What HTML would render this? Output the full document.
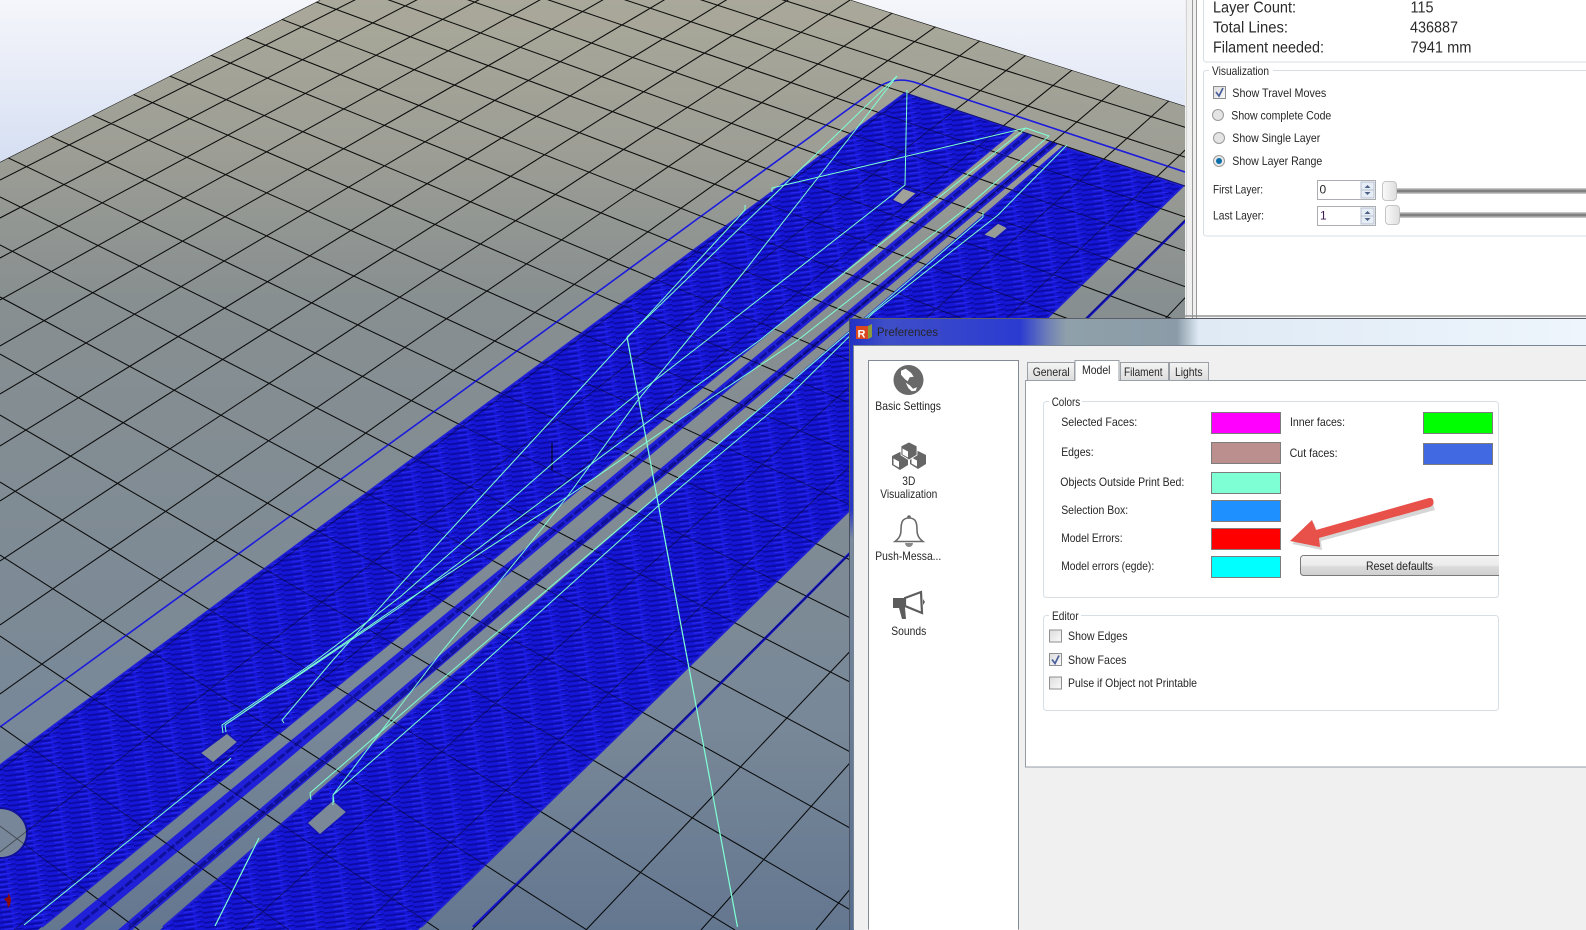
<!DOCTYPE html>
<html><head><meta charset="utf-8"><title>Preferences</title>
<style>
html,body{margin:0;padding:0;background:#f0f0f0;width:1586px;height:930px;overflow:hidden}
svg{display:block}
text{font-family:"Liberation Sans",sans-serif;font-size:12px;fill:#262626;white-space:pre}
.b{font-size:15.5px;fill:#2a2a2a}
</style></head><body>
<svg xmlns="http://www.w3.org/2000/svg" width="1586" height="930" viewBox="0 0 1586 930" style="overflow:hidden">
<defs>
<linearGradient id="sky" x1="0" y1="0" x2="0" y2="170" gradientUnits="userSpaceOnUse"><stop offset="0" stop-color="#f5f6fb"/><stop offset="1" stop-color="#d4def2"/></linearGradient>
<linearGradient id="bed" x1="0" y1="0" x2="0" y2="930" gradientUnits="userSpaceOnUse"><stop offset="0" stop-color="#a9a89a"/><stop offset=".16" stop-color="#9d9e95"/><stop offset=".32" stop-color="#888f90"/><stop offset=".78" stop-color="#788898"/><stop offset="1" stop-color="#647790"/></linearGradient>
<pattern id="bl" width="30" height="5" patternUnits="userSpaceOnUse" patternTransform="rotate(-7)">
<rect width="30" height="5" fill="#1616d6"/><rect width="20" height="1.8" fill="#0b0ba4"/><rect x="11" y="2.5" width="15" height="1.1" fill="#2828ee"/><rect x="23" y="3.5" width="7" height="1.4" fill="#0b0ba4"/></pattern>
<linearGradient id="title" x1="849" y1="0" x2="1586" y2="0" gradientUnits="userSpaceOnUse"><stop offset="0" stop-color="#2030c4"/><stop offset=".05" stop-color="#3f4ec8"/><stop offset=".232" stop-color="#2b3bd0"/><stop offset=".27" stop-color="#6f80b8"/><stop offset=".295" stop-color="#8fa0aa"/><stop offset=".445" stop-color="#8b9ca8"/><stop offset=".475" stop-color="#dfeaf5"/><stop offset="1" stop-color="#eef5fc"/></linearGradient>
<linearGradient id="fl" x1="0" y1="346" x2="0" y2="930" gradientUnits="userSpaceOnUse"><stop offset="0" stop-color="#2433d0"/><stop offset=".28" stop-color="#2a38c8"/><stop offset=".33" stop-color="#7b8b9d"/><stop offset="1" stop-color="#566d8e"/></linearGradient>
<linearGradient id="tab" x1="0" y1="0" x2="0" y2="1"><stop offset="0" stop-color="#f4f4f4"/><stop offset="1" stop-color="#dddddd"/></linearGradient>
<linearGradient id="btn" x1="0" y1="0" x2="0" y2="1"><stop offset="0" stop-color="#f4f4f4"/><stop offset=".5" stop-color="#ebebeb"/><stop offset=".55" stop-color="#dcdcdc"/><stop offset="1" stop-color="#cfcfcf"/></linearGradient>
<linearGradient id="track" x1="0" y1="0" x2="0" y2="1"><stop offset="0" stop-color="#d8d8d8"/><stop offset=".5" stop-color="#6f6f6f"/><stop offset="1" stop-color="#d8d8d8"/></linearGradient>
<linearGradient id="thumb" x1="0" y1="0" x2="1" y2="0"><stop offset="0" stop-color="#fafafa"/><stop offset="1" stop-color="#dedede"/></linearGradient>
<linearGradient id="cb" x1="0" y1="0" x2="1" y2="1"><stop offset="0" stop-color="#dcdcdc"/><stop offset="1" stop-color="#fafafa"/></linearGradient>
<clipPath id="bedclip"><polygon points="0,162 320,0 851,0 1185,106 1185,930 0,930"/></clipPath>
<clipPath id="bc"><rect x="1290" y="545" width="209" height="35"/></clipPath>
<path id="grid" fill="none" stroke="#000" stroke-width="1" d="
M0 180L1200 -429M0 218L1200 -410M0 258L1200 -389M0 300L1200 -367M0 346L1200 -343M0 394L1200 -318M0 446L1200 -291M0 501L1200 -262M0 561L1200 -231M0 625L1200 -198M0 694L1200 -162M0 770L1200 -123M0 852L1200 -80M14 930L1200 -34M128 930L1200 17M242 930L1200 73M358 930L1200 136M472 930L1200 205M586 930L1200 282M701 930L1200 370M816 930L1200 469M930 930L1200 583M1044 930L1200 714M1159 930L1200 869
M0 -248L1200 132M0 -228L1200 162M0 -208L1200 191M0 -187L1200 222M0 -164L1200 256M0 -140L1200 292M0 -115L1200 329M0 -88L1200 369M0 -59L1200 412M0 -30L1200 455M0 5L1200 507M0 37L1200 554M0 74L1200 609M0 113L1200 666M0 154L1200 727M0 197L1200 791M0 245L1200 862M0 297L1183 930M0 354L1033 930M0 415L885 930M0 482L735 930M0 555L587 930M0 636L439 930M0 726L289 930M0 826L139 930"/>
</defs>

<!-- 3D scene -->
<rect width="1185" height="930" fill="url(#sky)"/>
<polygon points="0,162 320,0 851,0 1185,106 1185,930 0,930" fill="url(#bed)"/>
<g clip-path="url(#bedclip)">
<use href="#grid" opacity=".85"/>
<path d="M0 727 L450 400 L700 217 L880 86 Q897 76 917 83 L1185 172" fill="none" stroke="#1c1cdc" stroke-width="1.6"/>
<path d="M1185 221 L848 555 L684 720 L473 927" fill="none" stroke="#1414c8" stroke-width="2.6"/>
<!-- print parts -->
<polygon points="905,93 1015,130 560,505 200,798 38,930 0,930 0,765" fill="url(#bl)"/>
<path d="M0 765L905 93L1015 130L560 505L200 798L42 927" fill="none" stroke="#2020d4" stroke-width="1.5"/>
<polygon points="1063,147 1183,186 418,930 160,930 200,895 560,582" fill="url(#bl)"/>
<path d="M163 927L200 895L560 582L1063 147L1183 186L421 927" fill="none" stroke="#2020d4" stroke-width="2"/>
<polygon points="1024,132 1033,135 560,531 200,833 84,930 60,930 200,815 560,520" fill="#2020d8"/>
<path d="M1028 134 L560 526 L200 824 L76 927" stroke="#10109e" stroke-width="3" stroke-dasharray="9 2" fill="none"/>
<polygon points="1050,141 1058,144 560,564 200,872 132,930 118,930 200,860 560,553" fill="#2020d8"/>
<path d="M1054 143 L560 559 L200 866 L129 927" stroke="#10109e" stroke-width="3" stroke-dasharray="9 2" fill="none"/>
<!-- notches -->
<g stroke="#1212b8" stroke-width="1.5">
<polygon points="892,200 903,188 917,193 903,205" fill="#a0a29a"/>
<polygon points="983,235 998,223 1008,228 995,239" fill="#989c97"/>
<polygon points="200,753 227,733 238,742 213,763" fill="#7f8c98"/>
<polygon points="307,823 333,800 347,812 320,835" fill="#7a8898"/>
<ellipse cx="0" cy="833" rx="27" ry="25" fill="#778698" stroke="#10109a" stroke-width="2"/>
</g>
<!-- grid seen through the print -->
<use href="#grid" opacity=".42"/>
<path d="M552 443V470" stroke="#000" stroke-width="1"/>
<!-- travel moves -->
<g fill="none" stroke="#7fffd4" stroke-width="1">
<path d="M772 192L772 188L1026 128L760 340L677 400L400 607L225 725L226 732"/>
<path d="M1026 128L1049 136L960 213L798 340L708 400L567 497L400 605L225 725"/>
<path d="M907 90L905 185L707 340L627 402L553 463L400 597L310 665L222 725L223 733"/>
<path d="M745 205L745 210L570 400L400 585L333 660L282 720L284 723"/>
<path d="M897 76L627 337"/>
<path d="M897 76L850 137L743 273L638 400L567 497L517 560L443 650L407 697L333 795L334 802"/>
<path d="M627 337L737.5 927" stroke-width="1.2"/>
<path d="M983 212L983 217L770 400L420 698L310 793L311 800"/>
<path d="M1067 145L998 215L873 313L785 400L657 507L442 700L333 795L333 805"/>
<path d="M231 758L229 760L24 925"/>
<path d="M259 838L215 926" stroke-width="1.2"/>
</g>
<path d="M8 893l2 3 1 4-1 5-2 3-1-6-3-3 4-2z" fill="#8c0c0c"/>
<path d="M0 162L320 0M851 0L1185 106" stroke="#111" stroke-width="1" fill="none"/>
</g>

<!-- right panel -->
<rect x="1185" y="0" width="401" height="318" fill="#f0f0f0"/>
<rect x="1186" y="0" width="1" height="318" fill="#d4d4d4"/>
<rect x="1192" y="0" width="1" height="318" fill="#9a9a9a"/>
<rect x="1196" y="0" width="1" height="318" fill="#9a9a9a"/>
<rect x="1197" y="0" width="389" height="317" fill="#fff"/>
<rect x="1185" y="315" width="401" height="2" fill="#8f8f8f" opacity=".7"/>
<path d="M1203.5 0V59Q1203.5 62 1206.5 62H1586M1586 70.5H1206.5Q1203.5 70.5 1203.5 73.5V233Q1203.5 236 1206.5 236H1586" fill="none" stroke="#d5dfe5"/>
<rect x="1209" y="65" width="64" height="12" fill="#fff"/>
<text class="b" x="1213" y="12.5" textLength="83" lengthAdjust="spacingAndGlyphs">Layer Count:</text>
<text class="b" x="1213" y="32.5" textLength="75" lengthAdjust="spacingAndGlyphs">Total Lines:</text>
<text class="b" x="1213" y="52.5" textLength="111" lengthAdjust="spacingAndGlyphs">Filament needed:</text>
<text class="b" x="1410.5" y="12.5" textLength="23" lengthAdjust="spacingAndGlyphs">115</text>
<text class="b" x="1410" y="32.5" textLength="48" lengthAdjust="spacingAndGlyphs">436887</text>
<text class="b" x="1410.5" y="52.5" textLength="61" lengthAdjust="spacingAndGlyphs">7941 mm</text>
<text x="1212" y="75" textLength="57" lengthAdjust="spacingAndGlyphs">Visualization</text>
<rect x="1213.5" y="86.5" width="12" height="12" fill="url(#cb)" stroke="#8e8f8f"/>
<path d="M1216 92l3 4 4-8" fill="none" stroke="#4a5f9a" stroke-width="1.7"/>
<text x="1232.3" y="97" textLength="94" lengthAdjust="spacingAndGlyphs">Show Travel Moves</text>
<circle cx="1218" cy="115" r="5.5" fill="#e4e4e4" stroke="#9a9a9a"/>
<text x="1231.3" y="119.5" textLength="100" lengthAdjust="spacingAndGlyphs">Show complete Code</text>
<circle cx="1219" cy="138" r="5.5" fill="#e4e4e4" stroke="#9a9a9a"/>
<text x="1232.3" y="142" textLength="88" lengthAdjust="spacingAndGlyphs">Show Single Layer</text>
<circle cx="1219" cy="161" r="5.5" fill="#eaeaea" stroke="#9a9a9a"/>
<circle cx="1219" cy="161" r="3" fill="#0b6ea8"/>
<text x="1232.3" y="165" textLength="90" lengthAdjust="spacingAndGlyphs">Show Layer Range</text>
<text x="1213" y="193.5" textLength="50" lengthAdjust="spacingAndGlyphs">First Layer:</text>
<text x="1213" y="219.5" textLength="51" lengthAdjust="spacingAndGlyphs">Last Layer:</text>
<g stroke="#abadb3" fill="#fff">
<rect x="1317.5" y="180.5" width="58" height="19"/>
<rect x="1317.5" y="206.5" width="58" height="19"/>
</g>
<g fill="#e6edf6" stroke="#b6c0cc">
<rect x="1361" y="182" width="13" height="8"/><rect x="1361" y="190" width="13" height="8"/>
<rect x="1361" y="208" width="13" height="8"/><rect x="1361" y="216" width="13" height="8"/>
</g>
<path fill="#4d6185" d="M1364.5 188l3-3 3 3zM1364.5 192l3 3 3-3zM1364.5 214l3-3 3 3zM1364.5 218l3 3 3-3z"/>
<text x="1319.5" y="193.5">0</text>
<text x="1320" y="219.5" style="fill:#3a1a50">1</text>
<rect x="1392" y="188" width="194" height="6" fill="url(#track)"/>
<rect x="1396" y="212" width="190" height="6" fill="url(#track)"/>
<rect x="1382.5" y="181.5" width="14" height="19" rx="3.5" fill="url(#thumb)" stroke="#c4c4c4"/>
<rect x="1385.5" y="205.5" width="14" height="19" rx="3.5" fill="url(#thumb)" stroke="#c4c4c4"/>

<!-- Preferences window -->
<rect x="849" y="318" width="737" height="28" fill="url(#title)"/>
<rect x="849" y="346" width="5" height="584" fill="url(#fl)"/>
<rect x="849" y="318" width="737" height="1" fill="#5a5f6a"/>
<rect x="849" y="318" width="1" height="612" fill="#4a5060"/>
<rect x="854" y="346" width="732" height="584" fill="#f0f0f0"/>
<path d="M853.5 929V345.5H1586" fill="none" stroke="#788694"/>
<rect x="856" y="326" width="12" height="13" fill="#d9481e"/>
<polygon points="868,326 872,324 872,337 868,339" fill="#8b9a3a"/>
<text x="857.5" y="337.5" style="font-size:11px;font-weight:bold;fill:#fff">R</text>
<text x="877" y="336" textLength="61" lengthAdjust="spacingAndGlyphs">Preferences</text>

<!-- sidebar -->
<rect x="869" y="361" width="149" height="569" fill="#fff"/>
<path d="M868.5 929.5V360.5H1018.5V929.5" fill="none" stroke="#828a94"/>
<circle cx="908.5" cy="380" r="15" fill="#696969"/>
<path d="M901 370.7L905.7 368.7L911 372.7L913.7 376.7L909.7 377.3L907.7 381.3L905 379.3L901 374.7Z" fill="#fff"/>
<path d="M905.7 382.7L909.7 385.3L913 388.7L917 387.3L915.7 390.7L911.7 391.3L908.3 388Z" fill="#fff"/>
<g transform="translate(900 461)"><path d="M0-9L8-5V4L0 9-8 4V-5Z" fill="#666"/><path d="M-6.5-2.5L-1 .5V6.5L-6.5 3.5Z" fill="#fff"/></g>
<g transform="translate(918 460)"><path d="M0-9L8-5V4L0 9-8 4V-5Z" fill="#666"/><path d="M-6.5-2.5L-1 .5V6.5L-6.5 3.5Z" fill="#fff"/></g>
<g transform="translate(909 451)"><path d="M0-9L8-5V4L0 9-8 4V-5Z" fill="#666" stroke="#fff" stroke-width=".8"/><path d="M-6.5-2.5L-1 .5V6.5L-6.5 3.5Z" fill="#fff"/></g>
<text x="875.3" y="410" textLength="65.7" lengthAdjust="spacingAndGlyphs">Basic Settings</text>
<text x="902.3" y="485" textLength="13" lengthAdjust="spacingAndGlyphs">3D</text>
<text x="880.3" y="498" textLength="57" lengthAdjust="spacingAndGlyphs">Visualization</text>
<circle cx="909" cy="517" r="1.8" fill="#666"/>
<path d="M909 518C902 518 901 523 901 530C901 537 897 540 895 541.5L923 541.5C921 540 917 537 917 530C917 523 916 518 909 518Z" fill="#fff" stroke="#6a6a6a" stroke-width="1.6"/>
<path d="M905 543A4 4 0 0 0 913 543Z" fill="#8a8a8a"/>
<text x="875.3" y="560" textLength="66" lengthAdjust="spacingAndGlyphs">Push-Messa...</text>
<path d="M893 598H905V608H893Z" fill="#5c5c5c"/>
<path d="M905 598L921 592L922 613L905 606Z" fill="#fff" stroke="#5c5c5c" stroke-width="2.2"/>
<path d="M923 599l2 3-2 3z" fill="#5c5c5c"/>
<path d="M899 608H905L906 619H902Z" fill="#5c5c5c"/>
<text x="891.3" y="635" textLength="35" lengthAdjust="spacingAndGlyphs">Sounds</text>

<!-- tabs -->
<rect x="1026" y="381" width="560" height="386" fill="#fff"/>
<path d="M1586 380.5H1025.5V767H1586" fill="none" stroke="#959ca4"/>
<g stroke="#9aa0a6" fill="url(#tab)">
<rect x="1027.5" y="362.5" width="47" height="18"/>
<rect x="1120.5" y="362.5" width="48" height="18"/>
<rect x="1169.5" y="362.5" width="39" height="18"/>
</g>
<path d="M1075 381V360.5H1119V381" fill="#fff" stroke="#9aa0a6"/>
<rect x="1075.5" y="379" width="43" height="3" fill="#fff"/>
<text x="1032.7" y="376" textLength="37" lengthAdjust="spacingAndGlyphs">General</text>
<text x="1082" y="374" textLength="28.5" lengthAdjust="spacingAndGlyphs">Model</text>
<text x="1124" y="376" textLength="38.5" lengthAdjust="spacingAndGlyphs">Filament</text>
<text x="1175" y="376" textLength="27.6" lengthAdjust="spacingAndGlyphs">Lights</text>

<!-- Colors -->
<rect x="1043.5" y="401.5" width="455" height="196" rx="3" fill="none" stroke="#d5dfe5"/>
<rect x="1049" y="396" width="33" height="12" fill="#fff"/>
<text x="1051.7" y="406" textLength="28.5" lengthAdjust="spacingAndGlyphs">Colors</text>
<text x="1061.2" y="426" textLength="76" lengthAdjust="spacingAndGlyphs">Selected Faces:</text>
<text x="1061.2" y="456" textLength="32.4" lengthAdjust="spacingAndGlyphs">Edges:</text>
<text x="1060.3" y="486" textLength="124" lengthAdjust="spacingAndGlyphs">Objects Outside Print Bed:</text>
<text x="1061.2" y="514" textLength="67" lengthAdjust="spacingAndGlyphs">Selection Box:</text>
<text x="1061.2" y="542" textLength="61.4" lengthAdjust="spacingAndGlyphs">Model Errors:</text>
<text x="1061.2" y="570" textLength="93" lengthAdjust="spacingAndGlyphs">Model errors (egde):</text>
<text x="1290" y="426" textLength="55" lengthAdjust="spacingAndGlyphs">Inner faces:</text>
<text x="1289.6" y="457" textLength="48" lengthAdjust="spacingAndGlyphs">Cut faces:</text>
<g stroke="#7d7d7d">
<rect x="1211.5" y="412.5" width="69" height="21" fill="#ff00ff"/>
<rect x="1211.5" y="442.5" width="69" height="21" fill="#bc8f8f"/>
<rect x="1211.5" y="472.5" width="69" height="21" fill="#7fffd4"/>
<rect x="1211.5" y="500.5" width="69" height="21" fill="#1e90ff"/>
<rect x="1211.5" y="528.5" width="69" height="21" fill="#ff0000"/>
<rect x="1211.5" y="556.5" width="69" height="21" fill="#00ffff"/>
<rect x="1423.5" y="412.5" width="69" height="21" fill="#00ff00"/>
<rect x="1423.5" y="443.5" width="69" height="21" fill="#4169e1"/>
</g>
<g clip-path="url(#bc)"><rect x="1300.5" y="555.5" width="230" height="20" rx="3" fill="url(#btn)" stroke="#7a7a7a"/></g>
<text x="1366" y="570" textLength="67" lengthAdjust="spacingAndGlyphs">Reset defaults</text>

<!-- Editor -->
<rect x="1043.5" y="615.5" width="455" height="95" rx="3" fill="none" stroke="#d5dfe5"/>
<rect x="1049" y="610" width="32" height="12" fill="#fff"/>
<text x="1052" y="620" textLength="26.6" lengthAdjust="spacingAndGlyphs">Editor</text>
<g fill="url(#cb)" stroke="#8e8f8f">
<rect x="1049.5" y="630" width="12" height="12"/>
<rect x="1049.5" y="653.5" width="12" height="12"/>
<rect x="1049.5" y="677" width="12" height="12"/>
</g>
<path d="M1052 659.5l3 4 4-8" fill="none" stroke="#4a5f9a" stroke-width="1.7"/>
<text x="1068" y="640" textLength="59.5" lengthAdjust="spacingAndGlyphs">Show Edges</text>
<text x="1068" y="664" textLength="58.5" lengthAdjust="spacingAndGlyphs">Show Faces</text>
<text x="1068" y="687" textLength="129" lengthAdjust="spacingAndGlyphs">Pulse if Object not Printable</text>

<!-- red arrow -->
<polygon points="1292,544 1314,523 1318,533 1432,501 1435,510 1321,541 1322,550" fill="#444" opacity=".22"/>
<path d="M1290 541L1312 520L1316 530L1429 498Q1433 497 1433.5 501.5Q1434 505.5 1430 507L1319 538L1320 547Z" fill="#e8504a"/>
</svg>
</body></html>
